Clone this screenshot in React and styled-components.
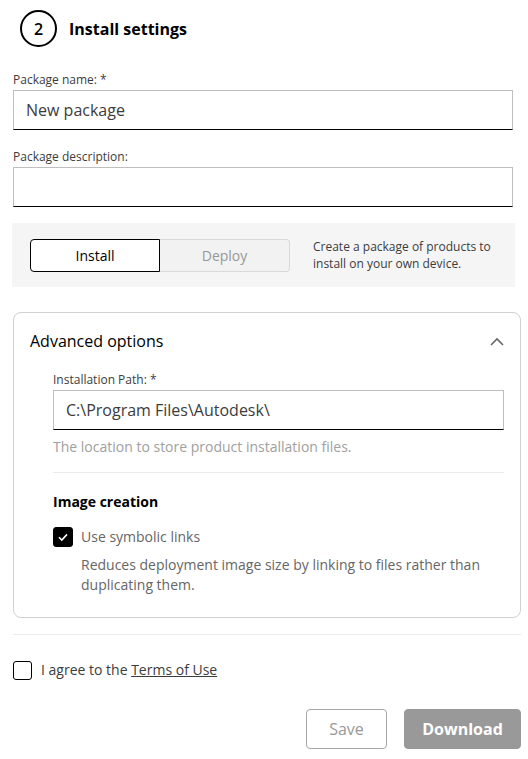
import React from 'react';
import styled, { createGlobalStyle } from 'styled-components';

const Global = createGlobalStyle`
  html, body {
    margin: 0;
    padding: 0;
    background: #fff;
  }
  body {
    font-family: "Open Sans", "Noto Sans", sans-serif;
    color: #3c3c3c;
  }
`;

const Page = styled.div`
  width: 508px;
  padding: 10px 0 9px 13px;
`;

const Header = styled.div`
  display: flex;
  align-items: center;
  gap: 12px;
  margin-left: 7px;
`;

const StepCircle = styled.div`
  width: 33px;
  height: 33px;
  border: 2px solid #000;
  border-radius: 50%;
  display: flex;
  align-items: center;
  justify-content: center;
  font-size: 16px;
  font-weight: 600;
  color: #000;
`;

const Title = styled.h2`
  margin: 0;
  font-size: 16px;
  font-weight: 700;
  color: #000;
`;

const Label = styled.label`
  display: block;
  font-size: 12px;
  line-height: 16px;
  color: #3c3c3c;
  margin-top: ${p => p.$top || 0}px;
  margin-bottom: 2px;
`;

const Input = styled.div`
  box-sizing: border-box;
  width: ${p => p.$width || '500px'};
  height: 40px;
  border: 1px solid #bfbfbf;
  border-bottom: 1px solid #000;
  padding: 0 12px;
  display: flex;
  align-items: center;
  font-size: 16px;
  color: #3c3c3c;
`;

const ModePanel = styled.div`
  margin: 16px 0 0 -1px;
  width: 503px;
  height: 64px;
  box-sizing: border-box;
  background: #f5f5f5;
  display: flex;
  align-items: center;
  padding: 0 18px;
  gap: 23px;
`;

const Toggle = styled.div`
  display: flex;
`;

const ToggleButton = styled.div`
  box-sizing: border-box;
  width: 130px;
  height: 33px;
  display: flex;
  align-items: center;
  justify-content: center;
  font-size: 14px;
  background: ${p => (p.$active ? '#fff' : '#f2f2f2')};
  color: ${p => (p.$active ? '#000' : '#999')};
  border: 1px solid ${p => (p.$active ? '#000' : '#d9d9d9')};
  border-radius: ${p => (p.$active ? '4px 0 0 4px' : '0 4px 4px 0')};
  ${p => !p.$active && 'border-left: none;'}
`;

const ModeText = styled.p`
  margin: 0;
  font-size: 12px;
  line-height: 17px;
  color: #3c3c3c;
  white-space: nowrap;
`;

const Card = styled.section`
  margin-top: 25px;
  border: 1px solid #d0d0d0;
  border-radius: 8px;
  padding: 16px 16px 22px 16px;
`;

const CardHead = styled.div`
  display: flex;
  align-items: center;
  justify-content: space-between;
  height: 24px;
`;

const CardTitle = styled.h3`
  margin: 0;
  font-size: 16px;
  font-weight: 500;
  color: #000;
`;

const CardBody = styled.div`
  padding-left: 23px;
`;

const Helper = styled.p`
  margin: 8px 0 0;
  font-size: 14px;
  line-height: 18px;
  color: #a0a0a0;
`;

const Divider = styled.hr`
  border: none;
  border-top: 1px solid #ebebeb;
  margin: ${p => p.$m || '0'};
`;

const SubTitle = styled.h4`
  margin: 0;
  font-size: 14px;
  font-weight: 700;
  color: #000;
  line-height: 20px;
`;

const CheckRow = styled.div`
  display: flex;
  align-items: center;
  gap: ${p => p.$gap || 8}px;
  margin-top: ${p => p.$top || 0}px;
`;

const Box = styled.span`
  box-sizing: border-box;
  width: ${p => p.$size}px;
  height: ${p => p.$size}px;
  border-radius: 3px;
  border: 1px solid #000;
  background: ${p => (p.$checked ? '#000' : '#fff')};
  display: flex;
  align-items: center;
  justify-content: center;
  flex-shrink: 0;
`;

const CheckText = styled.span`
  font-size: 14px;
  line-height: 20px;
  color: ${p => p.$color || '#666'};
`;

const Desc = styled.p`
  margin: 8px 0 0 28px;
  font-size: 14px;
  line-height: 20px;
  color: #666;
`;

const Link = styled.a`
  color: #3c3c3c;
  text-decoration: underline;
`;

const Actions = styled.div`
  display: flex;
  justify-content: flex-end;
  gap: 17px;
  margin-top: 29px;
`;

const Button = styled.button`
  box-sizing: border-box;
  height: 40px;
  width: ${p => p.$w}px;
  border-radius: 4px;
  font-family: inherit;
  font-size: 16px;
  border: 1px solid ${p => (p.$primary ? '#999' : '#a6a6a6')};
  background: ${p => (p.$primary ? '#999' : '#fff')};
  color: ${p => (p.$primary ? '#fff' : '#999')};
  font-weight: ${p => (p.$primary ? 700 : 400)};
`;

const Chevron = () => (
  <svg width="14" height="9" viewBox="0 0 14 9" fill="none">
    <path d="M1 8 L7 2 L13 8" stroke="#666" strokeWidth="1.6" />
  </svg>
);

const Tick = () => (
  <svg width="12" height="10" viewBox="0 0 12 10" fill="none">
    <path d="M2 5.2 L4.8 8 L10 2.4" stroke="#fff" strokeWidth="1.6" />
  </svg>
);

export default function App() {
  return (
    <Page>
      <Global />
      <Header>
        <StepCircle>2</StepCircle>
        <Title>Install settings</Title>
      </Header>

      <Label $top={25}>Package name: *</Label>
      <Input>New package</Input>

      <Label $top={19}>Package description:</Label>
      <Input />

      <ModePanel>
        <Toggle>
          <ToggleButton $active>Install</ToggleButton>
          <ToggleButton>Deploy</ToggleButton>
        </Toggle>
        <ModeText>
          Create a package of products to
          <br />
          install on your own device.
        </ModeText>
      </ModePanel>

      <Card>
        <CardHead>
          <CardTitle>Advanced options</CardTitle>
          <Chevron />
        </CardHead>
        <CardBody>
          <Label $top={19}>Installation Path: *</Label>
          <Input $width="100%">C:\Program Files\Autodesk\</Input>
          <Helper>The location to store product installation files.</Helper>
          <Divider $m="16px 0 19px" />
          <SubTitle>Image creation</SubTitle>
          <CheckRow $top={15}>
            <Box $size={20} $checked>
              <Tick />
            </Box>
            <CheckText>Use symbolic links</CheckText>
          </CheckRow>
          <Desc>
            Reduces deployment image size by linking to files rather than duplicating them.
          </Desc>
        </CardBody>
      </Card>

      <Divider $m="16px 0 0" />

      <CheckRow $top={25} $gap={9}>
        <Box $size={19} />
        <CheckText $color="#3c3c3c">
          I agree to the <Link>Terms of Use</Link>
        </CheckText>
      </CheckRow>

      <Actions>
        <Button $w={81}>Save</Button>
        <Button $w={117} $primary>Download</Button>
      </Actions>
    </Page>
  );
}
